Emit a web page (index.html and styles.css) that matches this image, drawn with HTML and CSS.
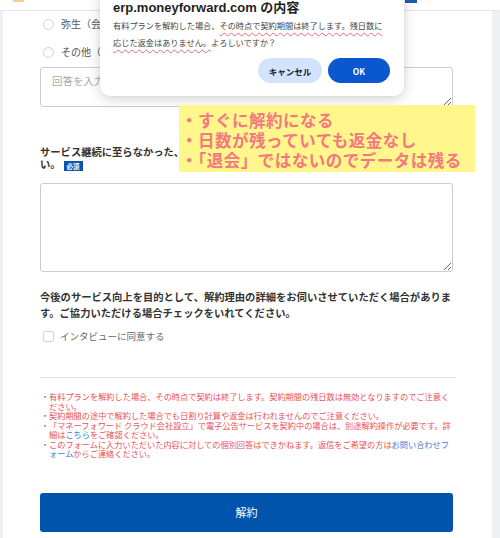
FILE: index.html
```html
<!DOCTYPE html>
<html lang="ja">
<head>
<meta charset="utf-8">
<link rel="stylesheet" href="styles.css">
</head>
<body>
<div class="topbar">
  <span class="top-yellow"></span>
  <span class="top-blue"></span>
</div>
<div class="page">
  <div class="card">
    <div class="radio-row"><span class="radio"></span><span class="radio-label">弥生（会計ソフト）</span></div>
    <div class="radio-row second"><span class="radio"></span><span class="radio-label">その他（具体的に）</span></div>
    <textarea class="answer small" placeholder="回答を入力してください"></textarea>

    <p class="question">サービス継続に至らなかった、最も大きな理由とその詳細について具体的に教えてください。<span class="badge">必須</span></p>
    <textarea class="answer large"></textarea>

    <p class="para">今後のサービス向上を目的として、解約理由の詳細をお伺いさせていただく場合があります。ご協力いただける場合チェックをいれてください。</p>
    <label class="check-row"><span class="checkbox"></span><span>インタビューに同意する</span></label>

    <hr class="divider">

    <ul class="notes">
      <li>有料プランを解約した場合、その時点で契約は終了します。契約期間の残日数は無効となりますのでご注意ください。</li>
      <li>契約期間の途中で解約した場合でも日割り計算や返金は行われませんのでご注意ください。</li>
      <li>「マネーフォワード クラウド会社設立」で電子公告サービスを契約中の場合は、別途解約操作が必要です。詳細は<a class="link">こちら</a>をご確認ください。</li>
      <li>このフォームに入力いただいた内容に対しての個別回答はできかねます。返信をご希望の方は<a class="link">お問い合わせフォーム</a>からご連絡ください。</li>
    </ul>

    <button class="submit">解約</button>
  </div>
</div>

<div class="dialog">
  <div class="dialog-title">erp.moneyforward.com の内容</div>
  <p class="dialog-body">有料プランを解約した場合、<span class="wavy">その時点で契約期間は終了します。残日数に応じた返金はありません。</span>よろしいですか？</p>
  <div class="dialog-buttons">
    <button class="btn-cancel">キャンセル</button>
    <button class="btn-ok">OK</button>
  </div>
</div>

<div class="memo">
  <div>・すぐに解約になる</div>
  <div>・日数が残っていても返金なし</div>
  <div>・「退会」ではないのでデータは残る</div>
</div>
</body>
</html>
```

FILE: styles.css
```css
* { box-sizing: border-box; }

html, body {
  margin: 0;
  padding: 0;
}

body {
  width: 500px;
  height: 538px;
  overflow: hidden;
  position: relative;
  background: #eef0f3;
  font-family: "Noto Sans CJK JP", "Liberation Sans", sans-serif;
  color: #333;
}

.topbar {
  height: 11px;
  background: #fff;
  border-bottom: 1px solid #e4e6ea;
  display: flex;
  align-items: flex-start;
}

.top-yellow {
  margin-left: 13px;
  width: 11px;
  height: 2px;
  background: #f6d28a;
}

.top-blue {
  margin-left: 381px;
  width: 12px;
  height: 3px;
  background: #1c5db0;
}

.page {
  padding: 0 8px 0 3px;
  height: 527px;
}

.card {
  background: #fff;
  height: 100%;
  padding: 6px 36px 0 37px;
}

.radio-row {
  display: flex;
  align-items: center;
  height: 14px;
  padding-left: 3px;
}

.radio-row.second {
  margin-top: 14px;
}

.radio {
  width: 11px;
  height: 11px;
  border: 1px solid #cfd2d6;
  border-radius: 50%;
  flex: none;
}

.radio-label {
  margin-left: 7px;
  font-size: 10px;
  line-height: 14px;
  color: #555;
  white-space: nowrap;
}

.answer {
  display: block;
  width: 413px;
  border: 1px solid #c9ccd1;
  border-radius: 3px;
  padding: 6px 11px;
  font-family: "Noto Sans CJK JP", sans-serif;
  font-size: 10.5px;
  line-height: 14px;
  color: #333;
  background: #fff;
  resize: vertical;
  margin: 0;
}

.answer::placeholder {
  color: #a9abae;
}

.answer.small {
  margin-top: 8px;
  height: 40px;
}

.answer.large {
  margin-top: 12px;
  height: 89px;
}

.question {
  margin: 39px 0 0;
  font-size: 10.3px;
  line-height: 12px;
  font-weight: bold;
  color: #333;
}

.badge {
  display: inline-block;
  background: #0a55b1;
  color: #fff;
  font-size: 6.5px;
  line-height: 10px;
  padding: 0 3px;
  margin-left: 3px;
  vertical-align: -1px;
  font-weight: bold;
}

.para {
  margin: 17px 0 0;
  font-size: 10.3px;
  line-height: 16px;
  font-weight: bold;
  color: #333;
}

.check-row {
  display: flex;
  align-items: center;
  height: 12px;
  margin-top: 9px;
  padding-left: 3px;
  font-size: 9.5px;
  color: #666;
}

.checkbox {
  width: 11px;
  height: 11px;
  border: 1px solid #d3d5d9;
  border-radius: 2px;
  margin-right: 6px;
  flex: none;
}

.divider {
  border: 0;
  border-top: 1px solid #dfe1e5;
  margin: 35px 0 0;
}

.notes {
  list-style: none;
  margin: 14px 0 0;
  padding: 0 4px 0 9px;
  font-size: 8.2px;
  line-height: 9.5px;
  color: #ea4f58;
}

.notes li {
  position: relative;
}

.notes li::before {
  content: "・";
  position: absolute;
  left: -8px;
}

.link {
  color: #3b7bd6;
}

.submit {
  display: block;
  width: 413px;
  height: 39px;
  margin-top: 34px;
  border: 0;
  border-radius: 3px;
  background: #0054ac;
  color: #fff;
  font-family: "Noto Sans CJK JP", sans-serif;
  font-size: 11px;
}

/* browser confirm dialog overlay */
.dialog {
  position: absolute;
  left: 100px;
  top: -12px;
  width: 304px;
  height: 108px;
  background: #fff;
  border-radius: 10px;
  box-shadow: 0 3px 14px rgba(0, 0, 0, 0.18), 0 0 2px rgba(0, 0, 0, 0.08);
  padding: 12px 14px 0 13px;
}

.dialog-title {
  font-family: "Liberation Sans", "Noto Sans CJK JP", sans-serif;
  font-size: 13px;
  line-height: 16px;
  font-weight: bold;
  color: #1f1f1f;
}

.dialog-body {
  margin: 1px 0 0;
  width: 276px;
  font-size: 8.2px;
  line-height: 17px;
  color: #444;
}

.wavy {
  text-decoration: underline wavy #f06a6e;
  text-decoration-thickness: 1px;
  text-underline-offset: 3px;
}

.dialog-buttons {
  display: flex;
  justify-content: flex-end;
  gap: 6px;
  margin-top: 7px;
}

.dialog-buttons button {
  height: 25px;
  border: 0;
  border-radius: 13px;
  font-family: "Noto Sans CJK JP", sans-serif;
  font-size: 8.5px;
  font-weight: bold;
}

.btn-cancel {
  width: 64px;
  background: #d3e3fd;
  color: #0b1d3f;
}

.btn-ok {
  width: 62px;
  background: #0b57d0;
  color: #fff;
}

/* annotation memo overlay */
.memo {
  position: absolute;
  left: 179px;
  top: 105px;
  width: 296px;
  height: 67px;
  background: #fff68c;
  padding: 5px 0 0 2px;
  font-size: 16.5px;
  line-height: 20px;
  letter-spacing: 0.5px;
  font-weight: bold;
  color: #f4787f;
  white-space: nowrap;
}
```
